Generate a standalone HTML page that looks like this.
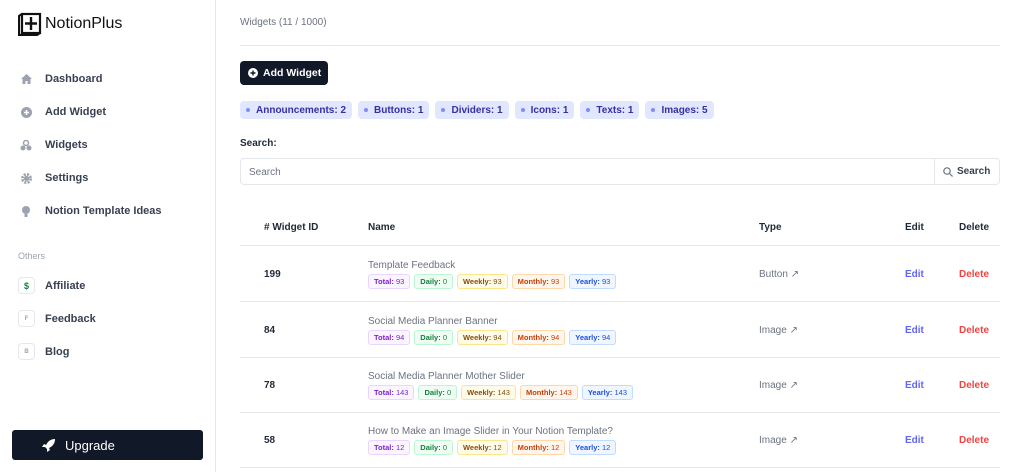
<!DOCTYPE html>
<html><head><meta charset="utf-8"><style>
*{box-sizing:border-box;margin:0;padding:0}
body{width:1024px;height:472px;overflow:hidden;background:#fff;font-family:"Liberation Sans",sans-serif;color:#1f2937;position:relative}
.sb{position:absolute;left:0;top:0;width:216px;height:472px;border-right:1px solid #e5e7eb}
.logo{position:absolute;left:18px;top:12px;display:flex;align-items:center;font-size:16px;color:#111}
.nav{position:absolute;left:20px;font-size:11px;font-weight:bold;color:#374151;display:flex;align-items:center}
.nav .ic{width:12px;height:12px;margin-right:13px;display:flex;align-items:center;justify-content:center}
.sq{width:17px!important;height:17px!important;border:1px solid #e5e7eb;border-radius:4px;font-size:6px;color:#9ca3af;margin-left:-2px;margin-right:10px!important}
.up{position:absolute;left:12px;top:430px;width:191px;height:30px;background:#111827;border-radius:3px;color:#fff;font-size:13px;display:flex;align-items:center;padding-left:30px}
.m{position:absolute;left:240px;top:0;width:760px}
.t{position:absolute;font-size:10px;color:#6b7280}
.chip{display:inline-flex;align-items:center;height:18px;background:#e0e7ff;color:#3730a3;border-radius:4px;font-size:10px;font-weight:bold;padding:0 6px;margin-right:4px}
.chip:before{content:"";width:4px;height:4px;border-radius:2px;background:#818cf8;margin-right:6px}
.row{position:absolute;left:0;width:760px;border-bottom:1px solid #e5e7eb;height:56px}
.row .id{position:absolute;left:24px;top:23px;font-size:10px;font-weight:bold}
.row .nm{position:absolute;left:128px;top:14px;font-size:10px;color:#6b7280}
.bd{position:absolute;left:128px;top:28px;display:flex}
.b{font-size:7.5px;font-weight:bold;height:15px;line-height:13px;padding:0 5px;border:1px solid;border-radius:3px;margin-right:4px}
.b span{font-weight:normal}
.p{color:#7e22ce;background:#faf5ff;border-color:#e9d5ff}
.g{color:#15803d;background:#f0fdf4;border-color:#bbf7d0}
.y{color:#854d0e;background:#fefce8;border-color:#fde68a}
.o{color:#c2410c;background:#fff7ed;border-color:#fed7aa}
.bl{color:#1d4ed8;background:#eff6ff;border-color:#bfdbfe}
.ty{position:absolute;left:519px;top:23px;font-size:10px;color:#6b7280}
.ed{position:absolute;left:665px;top:23px;font-size:10px;font-weight:bold;color:#6366f1}
.de{position:absolute;left:719px;top:23px;font-size:10px;font-weight:bold;color:#ef4444}
</style></head><body>
<div class="sb">
<div class="logo"><svg width="24" height="24" viewBox="0 0 24 24"><rect x="4" y="2" width="18" height="19" fill="#fff" stroke="#111" stroke-width="2.2"/><path d="M4 2 L1 4 V23 H19 L22 21" fill="none" stroke="#111" stroke-width="2.2"/><path d="M13 5V18M7 11.5H19" stroke="#111" stroke-width="2.4"/></svg><span style="margin-left:3px">NotionPlus</span></div>
<div class="nav" style="top:73px"><div class="ic"><svg width="11" height="10" viewBox="0 0 11 10"><path d="M5.5 0L0 5h1.5v5h3V7h2v3h3V5H11z" fill="#9ca3af"/></svg></div>Dashboard</div>
<div class="nav" style="top:106px"><div class="ic"><svg width="11" height="11"><circle cx="5.5" cy="5.5" r="5.5" fill="#9ca3af"/><path d="M5.5 3v5M3 5.5h5" stroke="#fff" stroke-width="1.5"/></svg></div>Add Widget</div>
<div class="nav" style="top:139px"><div class="ic"><svg width="12" height="11"><circle cx="6" cy="3" r="2.5" fill="none" stroke="#9ca3af" stroke-width="1.5"/><circle cx="3" cy="8" r="2.5" fill="#9ca3af"/><circle cx="9" cy="8" r="2.5" fill="#9ca3af"/></svg></div>Widgets</div>
<div class="nav" style="top:172px"><div class="ic"><svg width="11" height="11"><circle cx="5.5" cy="5.5" r="4" fill="none" stroke="#9ca3af" stroke-width="3" stroke-dasharray="2 1.2"/><circle cx="5.5" cy="5.5" r="2.5" fill="#9ca3af"/></svg></div>Settings</div>
<div class="nav" style="top:205px"><div class="ic"><svg width="8" height="11"><circle cx="4" cy="4" r="4" fill="#9ca3af"/><rect x="2.5" y="8" width="3" height="3" fill="#9ca3af"/></svg></div>Notion Template Ideas</div>
<div style="position:absolute;left:18px;top:251px;font-size:9px;color:#9ca3af">Others</div>
<div class="nav" style="top:277px"><div class="ic sq" style="color:#15803d;font-size:9px;font-weight:bold">$</div>Affiliate</div>
<div class="nav" style="top:310px"><div class="ic sq">F</div>Feedback</div>
<div class="nav" style="top:343px"><div class="ic sq">B</div>Blog</div>
<div class="up"><svg width="14" height="14" viewBox="0 0 14 14" style="margin-right:9px"><path d="M13 1C9 1 6 3 4 7L2 6 0 9h3l2 2v3l3-2-1-2c4-2 6-5 6-9z" fill="#fff"/></svg>Upgrade</div>
</div>
<div class="m">
<div class="t" style="top:17px;left:0">Widgets (11 / 1000)</div>
<div style="position:absolute;top:45px;left:0;width:760px;border-top:1px solid #e5e7eb"></div>
<div style="position:absolute;top:61px;left:0;width:88px;height:24px;background:#111827;border-radius:4px;color:#fff;font-size:10.5px;font-weight:bold;display:flex;align-items:center;padding-left:8px"><svg width="10" height="10" style="margin-right:5px"><circle cx="5" cy="5" r="5" fill="#fff"/><path d="M5 2.5v5M2.5 5h5" stroke="#111827" stroke-width="1.4"/></svg>Add Widget</div>
<div style="position:absolute;top:101px;left:0;display:flex"><span class="chip" style="margin-right:6px">Announcements: 2</span><span class="chip" style="margin-right:6px">Buttons: 1</span><span class="chip" style="margin-right:6px">Dividers: 1</span><span class="chip" style="margin-right:6px">Icons: 1</span><span class="chip" style="margin-right:6px">Texts: 1</span><span class="chip">Images: 5</span></div>
<div style="position:absolute;top:138px;left:0;font-size:10px;font-weight:bold">Search:</div>
<div style="position:absolute;top:158px;left:0;width:760px;height:27px;border:1px solid #e5e7eb;border-radius:4px;font-size:10px;color:#6b7280;padding:8px 8px"><span>Search</span>
<div style="position:absolute;right:0;top:0;width:65px;height:25px;border-left:1px solid #e5e7eb;display:flex;align-items:center;padding-left:8px;color:#374151;font-weight:bold"><svg width="10" height="10" style="margin-right:4px"><circle cx="4" cy="4" r="3.2" fill="none" stroke="#6b7280" stroke-width="1.2"/><path d="M6.5 6.5L9.5 9.5" stroke="#6b7280" stroke-width="1.2"/></svg>Search</div></div>
<div class="row" style="top:190px">
<div class="id" style="top:32px"># Widget ID</div><div class="nm" style="top:32px;color:#1f2937;font-weight:bold">Name</div><div class="ty" style="top:32px;color:#1f2937;font-weight:bold">Type</div><div class="ed" style="top:32px;color:#1f2937">Edit</div><div class="de" style="top:32px;color:#1f2937">Delete</div></div>
<div class="row" style="top:246px"><div class="id">199</div><div class="nm">Template Feedback</div><div class="bd"><div class="b p">Total: <span>93</span></div><div class="b g">Daily: <span>0</span></div><div class="b y">Weekly: <span>93</span></div><div class="b o">Monthly: <span>93</span></div><div class="b bl">Yearly: <span>93</span></div></div><div class="ty">Button ↗</div><div class="ed">Edit</div><div class="de">Delete</div></div>
<div class="row" style="top:302px"><div class="id">84</div><div class="nm">Social Media Planner Banner</div><div class="bd"><div class="b p">Total: <span>94</span></div><div class="b g">Daily: <span>0</span></div><div class="b y">Weekly: <span>94</span></div><div class="b o">Monthly: <span>94</span></div><div class="b bl">Yearly: <span>94</span></div></div><div class="ty">Image ↗</div><div class="ed">Edit</div><div class="de">Delete</div></div>
<div class="row" style="top:357px"><div class="id">78</div><div class="nm">Social Media Planner Mother Slider</div><div class="bd"><div class="b p">Total: <span>143</span></div><div class="b g">Daily: <span>0</span></div><div class="b y">Weekly: <span>143</span></div><div class="b o">Monthly: <span>143</span></div><div class="b bl">Yearly: <span>143</span></div></div><div class="ty">Image ↗</div><div class="ed">Edit</div><div class="de">Delete</div></div>
<div class="row" style="top:412px"><div class="id">58</div><div class="nm">How to Make an Image Slider in Your Notion Template?</div><div class="bd"><div class="b p">Total: <span>12</span></div><div class="b g">Daily: <span>0</span></div><div class="b y">Weekly: <span>12</span></div><div class="b o">Monthly: <span>12</span></div><div class="b bl">Yearly: <span>12</span></div></div><div class="ty">Image ↗</div><div class="ed">Edit</div><div class="de">Delete</div></div>
</div>
</body></html>
